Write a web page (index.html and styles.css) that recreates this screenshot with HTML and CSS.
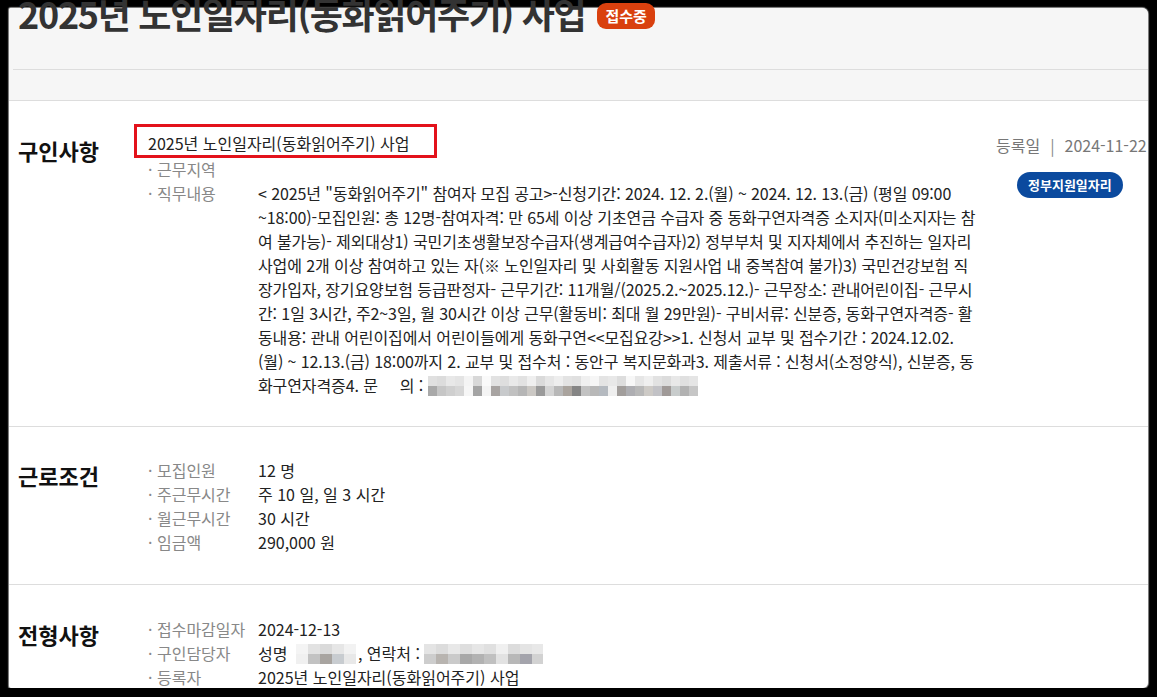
FILE: index.html
```html
<!DOCTYPE html>
<html lang="ko">
<head>
    <meta charset="UTF-8">
    <meta name="viewport" content="width=device-width, initial-scale=1.0">
    <title>2025년 노인일자리(동화읽어주기) 사업</title>
    <link rel="stylesheet" href="styles.css">
</head>
<body>
    <div class="frame">
        <header class="job-head">
            <div class="title-row">
                <h1 class="job-title">2025년 노인일자리(동화읽어주기) 사업</h1>
                <span class="state">접수중</span>
            </div>
            <div class="tab-row"></div>
        </header>

        <div class="content">
            <!-- 구인사항 -->
            <section class="sec sec-first">
                <h2 class="sec-title">구인사항</h2>
                <div class="sec-body">
                    <div class="mark">2025년 노인일자리(동화읽어주기) 사업</div>
                    <dl class="rows">
                        <div class="row"><dt>· 근무지역</dt><dd></dd></div>
                        <div class="row">
                            <dt>· 직무내용</dt>
                            <dd class="para">
                                <span class="ln">&lt; 2025년 "동화읽어주기" 참여자 모집 공고&gt;-신청기간: 2024. 12. 2.(월) ~ 2024. 12. 13.(금) (평일 09:00</span>
                                <span class="ln">~18:00)-모집인원: 총 12명-참여자격: 만 65세 이상 기초연금 수급자 중 동화구연자격증 소지자(미소지자는 참</span>
                                <span class="ln">여 불가능)- 제외대상1) 국민기초생활보장수급자(생계급여수급자)2) 정부부처 및 지자체에서 추진하는 일자리</span>
                                <span class="ln">사업에 2개 이상 참여하고 있는 자(※ 노인일자리 및 사회활동 지원사업 내 중복참여 불가)3) 국민건강보험 직</span>
                                <span class="ln">장가입자, 장기요양보험 등급판정자- 근무기간: 11개월/(2025.2.~2025.12.)- 근무장소: 관내어린이집- 근무시</span>
                                <span class="ln">간: 1일 3시간, 주2~3일, 월 30시간 이상 근무(활동비: 최대 월 29만원)- 구비서류: 신분증, 동화구연자격증- 활</span>
                                <span class="ln">동내용: 관내 어린이집에서 어린이들에게 동화구연&lt;&lt;모집요강&gt;&gt;1. 신청서 교부 및 접수기간 : 2024.12.02.</span>
                                <span class="ln">(월) ~ 12.13.(금) 18:00까지 2. 교부 및 접수처 : 동안구 복지문화과3. 제출서류 : 신청서(소정양식), 신분증, 동</span>
                                <span class="ln">화구연자격증4. 문&nbsp;&nbsp;&nbsp;&nbsp; 의 : <span class="blur blur-phone"></span></span>
                            </dd>
                        </div>
                    </dl>
                </div>
                <div class="meta">
                    <div class="reg">등록일<span class="bar">|</span>2024-11-22</div>
                    <span class="gov">정부지원일자리</span>
                </div>
            </section>

            <!-- 근로조건 -->
            <section class="sec">
                <h2 class="sec-title">근로조건</h2>
                <div class="sec-body">
                    <dl class="rows">
                        <div class="row"><dt>· 모집인원</dt><dd>12 명</dd></div>
                        <div class="row"><dt>· 주근무시간</dt><dd>주 10 일, 일 3 시간</dd></div>
                        <div class="row"><dt>· 월근무시간</dt><dd>30 시간</dd></div>
                        <div class="row"><dt>· 임금액</dt><dd>290,000 원</dd></div>
                    </dl>
                </div>
            </section>

            <!-- 전형사항 -->
            <section class="sec sec-last">
                <h2 class="sec-title">전형사항</h2>
                <div class="sec-body">
                    <dl class="rows">
                        <div class="row"><dt>· 접수마감일자</dt><dd>2024-12-13</dd></div>
                        <div class="row"><dt>· 구인담당자</dt><dd>성명 <span class="blur blur-name"></span>, 연락처 : <span class="blur blur-tel"></span></dd></div>
                        <div class="row"><dt>· 등록자</dt><dd>2025년 노인일자리(동화읽어주기) 사업</dd></div>
                    </dl>
                </div>
            </section>
        </div>
    </div>
</body>
</html>
```

FILE: styles.css
```css
body {
    margin: 0;
    background: #000;
    font-family: "Noto Sans CJK KR", "Noto Sans", sans-serif;
    color: #222;
}

.frame {
    display: flex;
    flex-direction: column;
    margin: 8px 9px 0 9px;
    width: 1139px;
    height: 680px;
    background: #fff;
    border-radius: 2px 6px 5px 2px;
    box-shadow: 0 0 1px 1px #8a8a8a;
}

/* header */
.job-head {
    flex: none;
    background: #f6f6f6;
    border-bottom: 1px solid #ddd;
    border-radius: 2px 6px 0 0;
}

.title-row {
    display: flex;
    align-items: flex-start;
    height: 61px;
    margin-left: 4px;
    padding-left: 5px;
    border-bottom: 1px solid #ddd;
}

.job-title {
    margin: -17px 0 0;
    font-size: 36px;
    line-height: 44px;
    font-weight: 700;
    letter-spacing: -1.3px;
    color: #333;
    white-space: nowrap;
}

.state {
    margin: -5px 0 0 12px;
    padding: 0 8px;
    height: 26px;
    line-height: 26px;
    border-radius: 9px;
    background: #d9400e;
    color: #fff;
    font-size: 15px;
    font-weight: 700;
}

.tab-row {
    height: 30px;
}

/* sections */
.content {
    flex: 1;
    overflow: hidden;
    border-radius: 0 0 5px 2px;
}

.sec {
    display: flex;
    padding: 31px 0 30px 9px;
    border-top: 1px solid #ddd;
    overflow: hidden;
}

.sec-first {
    padding-top: 23px;
    padding-bottom: 29px;
    border-top: none;
}

.sec-last {
    padding-top: 32px;
}

.sec-title {
    flex: none;
    width: 116px;
    margin: 5px 0 0;
    font-size: 22px;
    line-height: 24px;
    font-weight: 700;
    color: #111;
}

.sec-first .sec-title {
    margin-top: 14px;
}

.sec-body {
    flex: none;
    width: 862px;
}

.mark {
    width: 275px;
    height: 24px;
    margin-bottom: -1px;
    padding: 4px 11px 0;
    border: 3px solid #e3121b;
    font-size: 16px;
    line-height: 24px;
    color: #222;
    white-space: nowrap;
}

.rows {
    margin: 0;
    padding-left: 14px;
}

.row {
    display: flex;
    font-size: 16px;
    line-height: 24px;
}

.row dt {
    flex: none;
    width: 110px;
    color: #888;
}

.row dd {
    margin: 0;
    white-space: nowrap;
}

.para {
    letter-spacing: -0.1px;
}

.para .ln {
    display: block;
}

/* right meta */
.meta {
    flex: none;
    width: 160px;
    margin-top: 9px;
}

.reg {
    font-size: 16px;
    line-height: 24px;
    color: #777;
    white-space: nowrap;
}

.bar {
    margin: 0 10px;
    color: #888;
}

.gov {
    display: inline-block;
    margin: 15px 0 0 21px;
    padding: 0 11px;
    height: 26px;
    line-height: 26px;
    border-radius: 13px;
    background: #0b4a9e;
    color: #fff;
    font-size: 13px;
    font-weight: 700;
}

/* mosaic (hidden personal info) */
.blur {
    display: inline-block;
    vertical-align: middle;
    height: 20px;
    background-repeat: no-repeat;
    background-size: 100% 10px, 100% 10px;
    background-position: 0 0, 0 10px;
}

.blur-phone {
    width: 270px;
    margin-top: -4px;
    background-image:
        linear-gradient(90deg, #e0e0e0 0 9px, #dcdcdc 9px 18px, #e8e8e8 18px 27px, #e4e4e4 27px 36px, #f4f4f4 36px 45px, #d8d8d8 45px 54px, #fafafa 54px 63px, #e2e2e2 63px 72px, #dedede 72px 81px, #e9e9e9 81px 90px, #e2e2e2 90px 99px, #efefef 99px 108px, #dadada 108px 117px, #e6e6e6 117px 126px, #eeeeee 126px 135px, #e3e3e3 135px 144px, #e0e0e0 144px 153px, #f0f0f0 153px 162px, #f6f6f6 162px 171px, #e4e4e4 171px 180px, #e8e8e8 180px 189px, #dddddd 189px 198px, #f7f7f7 198px 207px, #e6e6e6 207px 216px, #efefef 216px 225px, #e2e2e2 225px 234px, #dcdcdc 234px 243px, #e8e8e8 243px 252px, #e0e0e0 252px 261px, #e5e5e5 261px 270px),
        linear-gradient(90deg, #a9a9a9 0 9px, #c6c6c6 9px 18px, #cfcfcf 18px 27px, #d6d6d6 27px 36px, #f6f6f6 36px 45px, #a4a4a4 45px 54px, #f4f4f4 54px 63px, #a8a4a2 63px 72px, #c8cacc 72px 81px, #c1c1c1 81px 90px, #b6b6b6 90px 99px, #cbc8c4 99px 108px, #9a9a9a 108px 117px, #d4d4d4 117px 126px, #b8b8b8 126px 135px, #aaa49e 135px 144px, #858585 144px 153px, #c2c2c2 153px 162px, #b8b8b8 162px 171px, #b5bac0 171px 180px, #efefef 180px 189px, #a29e9c 189px 198px, #aeaeb2 198px 207px, #b8b8b8 207px 216px, #cdcac6 216px 225px, #c2c2c6 225px 234px, #a09a98 234px 243px, #c8cccc 243px 252px, #b2b2b2 252px 261px, #c6c6c6 261px 270px);
}

.blur-name {
    width: 60px;
    margin: -3px 2px 0 4px;
    background-image:
        linear-gradient(90deg, #f4f4f4 0 12px, #e2e2e2 12px 24px, #dadada 24px 36px, #e6e6e6 36px 48px, #f2f2f2 48px 60px),
        linear-gradient(90deg, #f0f0f0 0 12px, #c2c2c2 12px 24px, #a8a4a0 24px 36px, #c8ccd0 36px 48px, #e8e8e8 48px 60px);
}

.blur-tel {
    width: 119px;
    margin-top: -3px;
    background-image:
        linear-gradient(90deg, #e4e4e4 0 12px, #dcdcdc 12px 24px, #e8e8e8 24px 36px, #dedede 36px 48px, #e6e6e6 48px 60px, #e0e0e0 60px 72px, #f0f0f0 72px 84px, #dcdcdc 84px 96px, #e4e4e4 96px 108px, #e8e8e8 108px 119px),
        linear-gradient(90deg, #cdcdcd 0 12px, #b8b4b0 12px 24px, #cacaca 24px 36px, #a8a8a8 36px 48px, #b2b2b2 48px 60px, #c0c0c0 60px 72px, #e2e2e2 72px 84px, #b8b8b8 84px 96px, #a4a4ac 96px 108px, #d2d2d2 108px 119px);
}
```
